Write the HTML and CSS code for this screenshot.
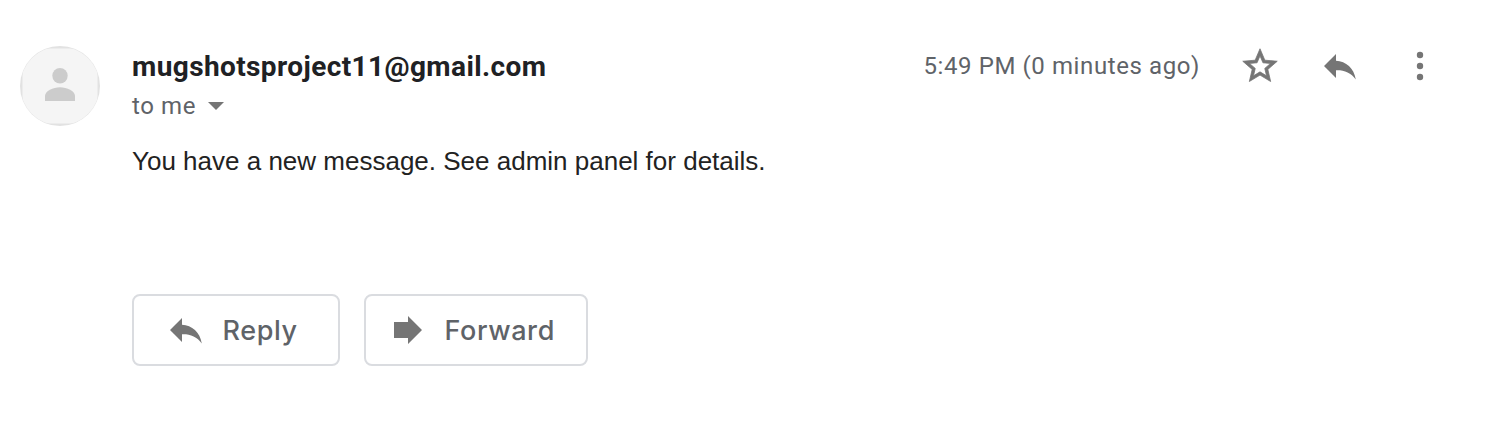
FILE: index.html
```html
<!DOCTYPE html>
<html lang="en">
<head>
<meta charset="utf-8">
<title>Message</title>
<link rel="stylesheet" href="styles.css">
</head>
<body>
<article class="message">
  <svg class="avatar" viewBox="0 0 80 80"><clipPath id="round"><circle cx="40" cy="40" r="39.600"/></clipPath><circle cx="40" cy="40" r="40" fill="#e2e2e2"/><rect x="2.500" y="2.500" width="75" height="75" fill="#f5f5f5" clip-path="url(#round)"/><circle cx="40" cy="29.700" r="7.700" fill="#ccc"/><path d="M25 55v-5c0-5 8-8.800 15-8.800s15 3.800 15 8.800v5z" fill="#ccc"/></svg>
  <div class="content">
    <header class="header">
      <div class="sender">mugshotsproject11@gmail.com</div>
      <time class="time">5:49 PM (0 minutes ago)</time>
      <svg class="icon star" viewBox="0.400 0.400 23.200 23.200"><path d="M22 9.240l-7.190-.620L12 2 9.190 8.630 2 9.240l5.460 4.730L5.820 21 12 17.270 18.180 21l-1.630-7.030L22 9.240zM12 15.400l-3.760 2.270 1-4.280-3.320-2.880 4.380-.380L12 6.100l1.710 4.040 4.380.380-3.320 2.880 1 4.280L12 15.400z"/></svg>
      <svg class="icon" viewBox="0 0 40 40"><path d="M16 14.700V8L4 20l12 12v-7.700c8-.3 15 2.200 19.800 9.200C34 22 26 15.200 16 14.700z"/></svg>
      <svg class="icon" viewBox="0 0 40 40"><circle cx="20" cy="9" r="3.200"/><circle cx="20" cy="20" r="3.200"/><circle cx="20" cy="31" r="3.200"/></svg>
    </header>
    <div class="recipient">to me<span class="caret"></span></div>
    <p class="body">You have a new message. See admin panel for details.</p>
    <footer class="actions">
      <button class="button button-reply"><svg class="icon" viewBox="0 0 40 40"><path d="M16 14.700V8L4 20l12 12v-7.700c8-.3 15 2.200 19.800 9.200C34 22 26 15.200 16 14.700z"/></svg><span>Reply</span></button>
      <button class="button button-forward"><svg class="icon" viewBox="0 0 40 40"><path d="M6 12h14V6l14 14-14 14v-6H6z"/></svg><span>Forward</span></button>
    </footer>
  </div>
</article>
</body>
</html>
```
FILE: styles.css
```css
body { margin: 0; background: #fff; color: #202124; }
.message { display: flex; gap: 32px; padding: 46px 54px 0 20px; }
.avatar { width: 80px; height: 80px; flex: none; }
.content { flex: 1; }
.header { display: flex; height: 40px; align-items: center; font-family: Roboto, sans-serif; }
.sender { flex: 1; font-size: 28px; font-weight: 700; letter-spacing: .4px; }
.time { font-size: 24px; letter-spacing: .6px; color: #5f6368; margin-right: 40px; }
.icon { width: 40px; height: 40px; fill: #757575; flex: none; }
.star { stroke: #757575; stroke-width: .45px; }
.header .icon + .icon { margin-left: 40px; }
.recipient { display: flex; align-items: center; height: 40px; font: 24px Roboto, sans-serif; letter-spacing: .6px; color: #5f6368; }
.caret { margin-left: 12px; border: 8px solid transparent; border-top-color: #757575; border-bottom: 0; }
.body { margin: 20px 0 0; font: 26px/30px "Liberation Sans", Arial, sans-serif; color: #222; }
.actions { display: flex; gap: 24px; margin-top: 118px; }
.button { box-sizing: border-box; height: 72px; display: flex; align-items: center; background: #fff; border: 2px solid #dadce0; border-radius: 8px; padding: 0; font: 500 27px Inter, sans-serif; letter-spacing: .6px; color: #5f6368; }
.button-reply { width: 208px; padding-left: 32px; }
.button-forward { width: 224px; padding-left: 22px; }
.button span { margin-left: 16.500px; }
```
